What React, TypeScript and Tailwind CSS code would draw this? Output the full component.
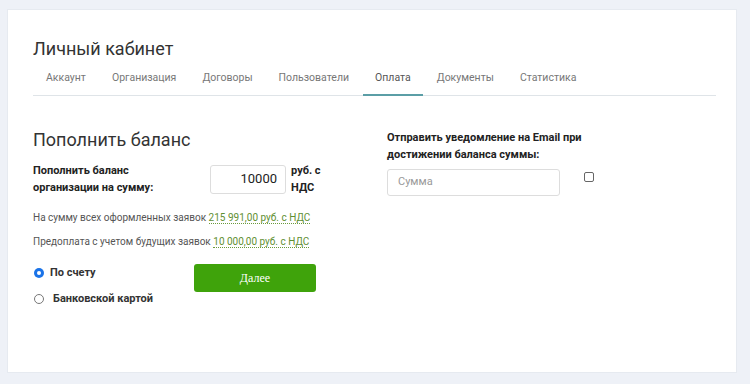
const tabs = ["Аккаунт", "Организация", "Договоры", "Пользователи", "Оплата", "Документы", "Статистика"];

export default function App() {
  return (
    <div className="h-[384px] w-[750px] bg-[#eef1f7] pl-[8px] pt-[10px] font-['Roboto',sans-serif]">
      <div className="h-[362px] w-[728px] bg-white pl-[25px] pr-[20px] pt-[27px] shadow-[0_0_0_1px_#e6eaf0]">
        <h1 className="text-[18px] leading-[24px] text-[#333]">Личный кабинет</h1>

        <nav className="mt-[7px] flex border-b border-[#dfe4e8] pl-[1px]">
          {tabs.map((t) => (
            <div
              key={t}
              className={
                t === "Оплата"
                  ? "-mb-px mr-[2px] border-b-2 border-[#5b9ea6] px-[12px] pb-[8px] pt-[2px] text-[10.5px] leading-[16px] text-[#555]"
                  : "mr-[2px] px-[12px] pb-[8px] pt-[2px] text-[10.5px] leading-[16px] text-[#777]"
              }
            >
              {t}
            </div>
          ))}
        </nav>

        <div className="mt-[32px] flex">
          <div className="w-[354px]">
            <h2 className="text-[18px] leading-[24px] text-[#333]">Пополнить баланс</h2>
            <div className="mt-[10px] flex items-center">
              <div className="w-[177px]">
                <p className="w-[140px] text-[11px] font-bold leading-[17px] text-[#222]">
                  Пополнить баланс организации на сумму:
                </p>
              </div>
              <div className="flex h-[29px] w-[76px] items-center justify-end rounded-[3px] border border-[#ddd] pr-[8px] text-[13px] text-[#222]">
                10000
              </div>
              <p className="ml-[5px] w-[46px] text-[11px] font-bold leading-[17px] text-[#222]">руб. с НДС</p>
            </div>
            <p className="mt-[14px] text-[10px] leading-[16px] text-[#555]">
              На сумму всех оформленных заявок{" "}
              <span className="border-b border-dotted border-[#6b9a3c] text-[#5f8f32]">215 991,00 руб. с НДС</span>
            </p>
            <p className="mt-[8px] text-[10px] leading-[16px] text-[#555]">
              Предоплата с учетом будущих заявок{" "}
              <span className="border-b border-dotted border-[#6b9a3c] text-[#5f8f32]">10 000,00 руб. с НДС</span>
            </p>
            <div className="mt-[15px] flex">
              <div className="w-[161px]">
                <label className="flex items-center text-[11px] font-bold text-[#333]">
                  <span className="ml-[1px] mr-[6px] flex h-[10px] w-[10px] items-center justify-center rounded-full bg-[#1a73e8]">
                    <span className="h-[4px] w-[4px] rounded-full bg-white" />
                  </span>
                  По счету
                </label>
                <label className="mt-[9px] flex items-center text-[11px] font-bold text-[#333]">
                  <span className="ml-[1px] mr-[9px] h-[10px] w-[10px] rounded-full border border-[#777]" />
                  Банковской картой
                </label>
              </div>
              <button className="mt-[-1px] h-[28px] w-[122px] rounded-[3px] bg-[#3fa30b] font-['Liberation_Serif',serif] text-[12px] text-white">
                Далее
              </button>
            </div>
          </div>

          <div className="mt-[1px]">
            <p className="w-[220px] text-[11px] font-bold leading-[17px] text-[#222]">
              Отправить уведомление на Email при достижении баланса суммы:
            </p>
            <div className="mt-[6px] flex items-start">
              <div className="flex h-[27px] w-[173px] items-center rounded-[3px] border border-[#ddd] pl-[10px] text-[11px] text-[#999]">
                Сумма
              </div>
              <span className="ml-[24px] mt-[3px] h-[10px] w-[10px] rounded-[2px] border border-[#666]" />
            </div>
          </div>
        </div>
      </div>
    </div>
  );
}
